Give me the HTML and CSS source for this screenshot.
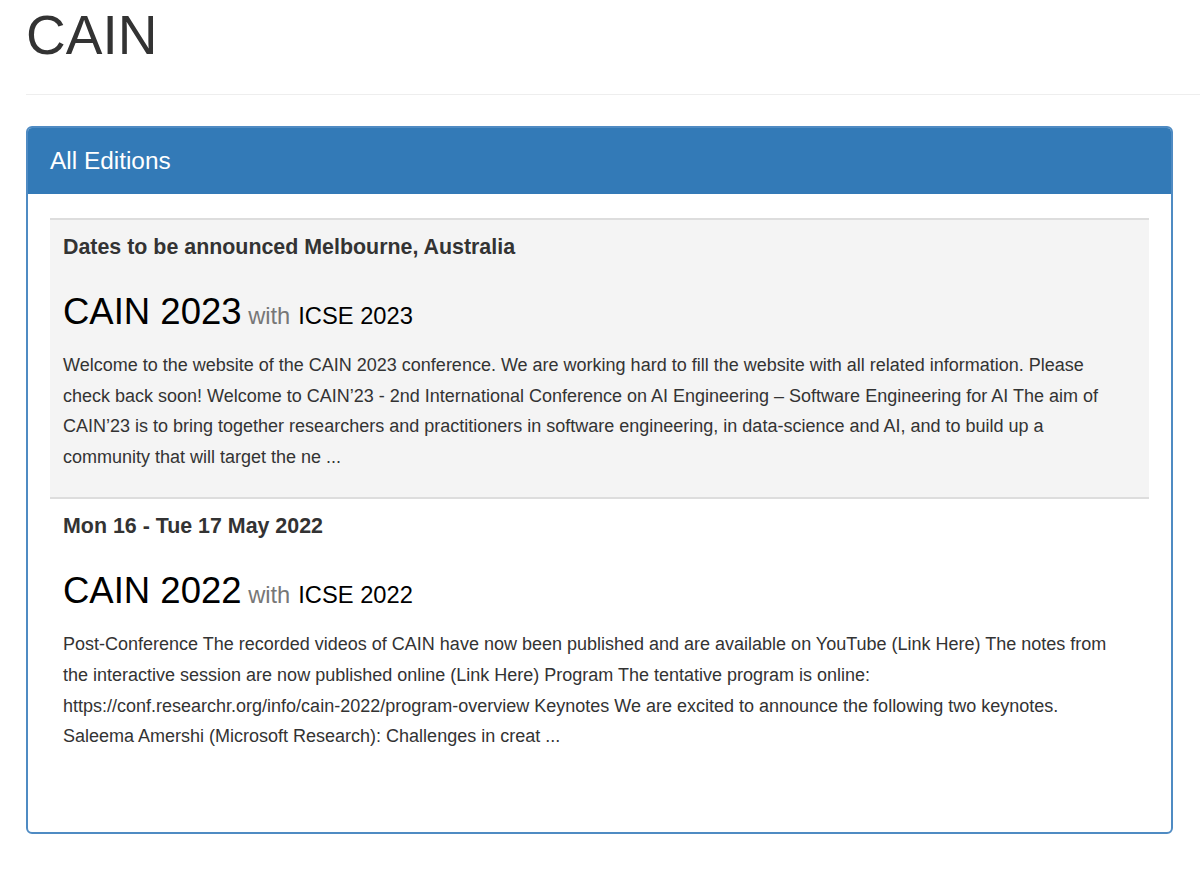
FILE: index.html
```html
<!DOCTYPE html>
<html lang="en">
<head>
  <meta charset="UTF-8">
  <meta name="viewport" content="width=device-width, initial-scale=1.0">
  <title>CAIN - All Editions</title>
  <link rel="stylesheet" href="styles.css">
</head>
<body>
  <div class="page">
    <header class="page-header">
      <h1>CAIN</h1>
    </header>

    <section class="panel">
      <div class="panel-heading">
        <h3 class="panel-title">All Editions</h3>
      </div>
      <div class="panel-body">
        <div class="edition edition-striped">
          <div class="edition-date">Dates to be announced Melbourne, Australia</div>
          <h2 class="edition-title">CAIN 2023<small> with</small><span class="edition-host">ICSE 2023</span></h2>
          <p class="edition-text">Welcome to the website of the CAIN 2023 conference. We are working hard to fill the website with all related information. Please check back soon! Welcome to CAIN’23 - 2nd International Conference on AI Engineering – Software Engineering for AI The aim of CAIN’23 is to bring together researchers and practitioners in software engineering, in data-science and AI, and to build up a community that will target the ne ...</p>
        </div>

        <div class="edition">
          <div class="edition-date">Mon 16 - Tue 17 May 2022</div>
          <h2 class="edition-title">CAIN 2022<small> with</small><span class="edition-host">ICSE 2022</span></h2>
          <p class="edition-text">Post-Conference The recorded videos of CAIN have now been published and are available on YouTube (Link Here) The notes from the interactive session are now published online (Link Here) Program The tentative program is online: https://conf.researchr.org/info/cain-2022/program-overview Keynotes We are excited to announce the following two keynotes. Saleema Amershi (Microsoft Research): Challenges in creat ...</p>
        </div>
      </div>
    </section>
  </div>
</body>
</html>
```

FILE: styles.css
```css
:root {
  --primary: #337ab7;
  --text-color: #333;
  --muted: #777;
  --row-border: #ddd;
  --row-stripe: #f4f4f4;
}

body {
  font-family: 'Liberation Sans', Arial, sans-serif;
  margin: 0;
  padding: 0;
  background: #fff;
  color: var(--text-color);
}

.page {
  padding-left: 26px;
}

.page-header {
  padding: 7px 0 31px;
  border-bottom: 1px solid #eee;
}

.page-header h1 {
  margin: 0;
  font-size: 55px;
  font-weight: 400;
  line-height: 56px;
  color: var(--text-color);
}

.panel {
  width: 1143px;
  margin-top: 31px;
  border: 2px solid #4f8bc3;
  border-radius: 6px;
  overflow: hidden;
}

.panel-heading {
  background-color: var(--primary);
  padding: 19px 22px;
}

.panel-title {
  margin: 0;
  font-size: 24.4px;
  font-weight: 400;
  line-height: 27.5px;
  color: #fff;
}

.panel-body {
  padding: 24px 22px 56px;
}

.edition {
  border-top: 2px solid var(--row-border);
  padding: 16px 30px 24px 13px;
}

.edition-striped {
  background-color: var(--row-stripe);
}

.edition-date {
  font-size: 21.4px;
  font-weight: 700;
  line-height: 22px;
}

.edition-title {
  margin: 35px 0 0;
  font-size: 36.5px;
  font-weight: 400;
  line-height: 38.6px;
  color: #000;
}

.edition-title small {
  font-size: 23.7px;
  color: var(--muted);
}

.edition-host {
  margin-left: 8px;
  font-size: 23.7px;
  color: #000;
}

.edition-text {
  margin: 15px 0 0;
  font-size: 18px;
  line-height: 30.67px;
}
```
